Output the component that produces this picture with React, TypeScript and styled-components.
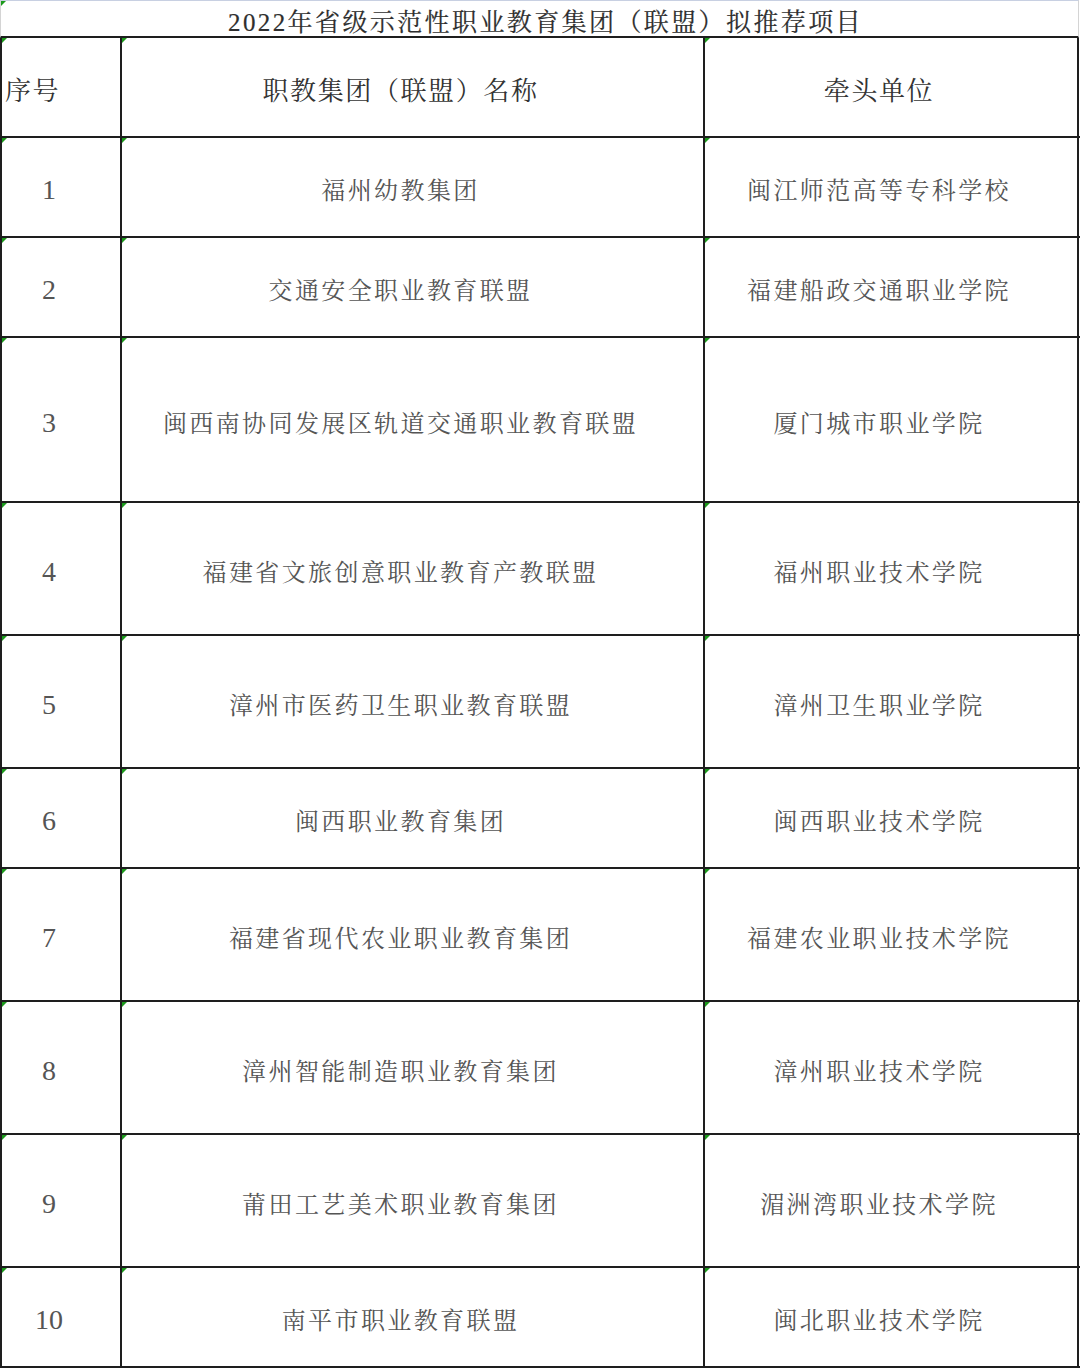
import { FC } from "react";
import styled, { createGlobalStyle } from "styled-components";

const GlobalStyle = createGlobalStyle`
  html, body {
    margin: 0;
    padding: 0;
    background: #ffffff;
  }
  body {
    font-family: "Liberation Serif", "Noto Serif CJK SC", "Noto Sans CJK SC", serif;
  }
`;

interface Project {
  id: number;
  name: string;
  lead: string;
  height: number;
}

const projects: Project[] = [
  { id: 1, name: "福州幼教集团", lead: "闽江师范高等专科学校", height: 100 },
  { id: 2, name: "交通安全职业教育联盟", lead: "福建船政交通职业学院", height: 100 },
  { id: 3, name: "闽西南协同发展区轨道交通职业教育联盟", lead: "厦门城市职业学院", height: 165 },
  { id: 4, name: "福建省文旅创意职业教育产教联盟", lead: "福州职业技术学院", height: 133 },
  { id: 5, name: "漳州市医药卫生职业教育联盟", lead: "漳州卫生职业学院", height: 133 },
  { id: 6, name: "闽西职业教育集团", lead: "闽西职业技术学院", height: 100 },
  { id: 7, name: "福建省现代农业职业教育集团", lead: "福建农业职业技术学院", height: 133 },
  { id: 8, name: "漳州智能制造职业教育集团", lead: "漳州职业技术学院", height: 133 },
  { id: 9, name: "莆田工艺美术职业教育集团", lead: "湄洲湾职业技术学院", height: 133 },
  { id: 10, name: "南平市职业教育联盟", lead: "闽北职业技术学院", height: 100 },
];

const Sheet = styled.div`
  width: 1080px;
  display: flex;
  flex-direction: column;
`;

const TitleRow = styled.div`
  position: relative;
  box-sizing: border-box;
  width: 1079px;
  height: 38px;
  border-top: 1px solid #c8d0e2;
  border-left: 1px solid #d4d4d4;
  border-right: 1px solid #d4d4d4;
  border-bottom: 2px solid #1e1e1e;
  display: flex;
  align-items: center;
  justify-content: center;
  padding-left: 12px;
  padding-top: 2px;
  font-size: 25px;
  letter-spacing: 2.4px;
  color: #2e2e2e;
  -webkit-text-stroke: 0.2px #2e2e2e;
`;

const Row = styled.div<{ $h: number }>`
  box-sizing: border-box;
  display: flex;
  height: ${({ $h }) => $h}px;
  border-left: 2px solid #1e1e1e;
  border-bottom: 2px solid #1e1e1e;
`;

const Cell = styled.div<{ $w: number; $left?: boolean; $head?: boolean }>`
  position: relative;
  box-sizing: border-box;
  width: ${({ $w }) => $w}px;
  flex: none;
  border-right: 2px solid #1e1e1e;
  display: flex;
  align-items: center;
  justify-content: ${({ $left }) => ($left ? "flex-start" : "center")};
  padding: ${({ $left }) => ($left ? "3px 0 0 3px" : "3px 24px 0 0")};
  font-size: ${({ $head }) => ($head ? "26px" : "24px")};
  letter-spacing: ${({ $head }) => ($head ? "1.6px" : "2.4px")};
  color: ${({ $head }) => ($head ? "#333333" : "#555555")};
  white-space: nowrap;
`;

const Marker = styled.span`
  position: absolute;
  top: 0;
  left: 0;
  width: 0;
  height: 0;
  border-top: 5px solid #1c9a1c;
  border-right: 5px solid transparent;
`;

const Num = styled.span`
  letter-spacing: 0;
  font-size: 28px;
  margin-top: 3px;
`;

const widths = [120, 583, 374];

const App: FC = () => {
  return (
    <>
      <GlobalStyle />
      <Sheet>
        <TitleRow>
          <Marker />
          2022年省级示范性职业教育集团（联盟）拟推荐项目
        </TitleRow>
        <Row $h={100}>
          <Cell $w={widths[0]} $left $head>
            <Marker />
            序号
          </Cell>
          <Cell $w={widths[1]} $head>
            <Marker />
            职教集团（联盟）名称
          </Cell>
          <Cell $w={widths[2]} $head>
            <Marker />
            牵头单位
          </Cell>
        </Row>
        {projects.map((p) => (
          <Row key={p.id} $h={p.height}>
            <Cell $w={widths[0]}>
              <Marker />
              <Num>{p.id}</Num>
            </Cell>
            <Cell $w={widths[1]}>
              <Marker />
              {p.name}
            </Cell>
            <Cell $w={widths[2]}>
              <Marker />
              {p.lead}
            </Cell>
          </Row>
        ))}
      </Sheet>
    </>
  );
};

export default App;
